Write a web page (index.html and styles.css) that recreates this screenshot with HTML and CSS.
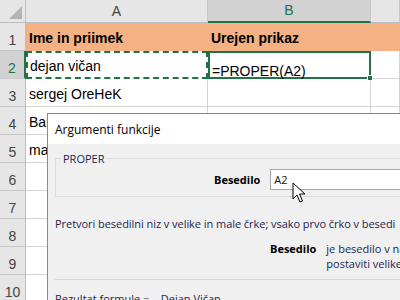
FILE: index.html
```html
<!DOCTYPE html>
<html lang="sl">
<head>
    <meta charset="UTF-8">
    <title>Argumenti funkcije</title>
<link rel="stylesheet" href="styles.css">
</head>
<body>
    <div class="sheet">
        <div class="corner"><span class="tri"></span></div>
        <div class="colhead">A</div>
        <div class="colhead active">B</div>
        <div class="colhead"></div>

        <div class="rowhead">1</div>
        <div class="cell title">Ime in priimek</div>
        <div class="cell title">Urejen prikaz</div>
        <div class="cell title"></div>

        <div class="rowhead active">2</div>
        <div class="cell copy">dejan vičan</div>
        <div class="cell edit">=PROPER(A2)<span class="handle"></span></div>
        <div class="cell"></div>

        <div class="rowhead">3</div>
        <div class="cell">sergej OreHeK</div>
        <div class="cell"></div>
        <div class="cell"></div>

        <div class="rowhead">4</div>
        <div class="cell">BaR</div>
        <div class="cell"></div>
        <div class="cell"></div>

        <div class="rowhead">5</div>
        <div class="cell">ma</div>
        <div class="cell"></div>
        <div class="cell"></div>

        <div class="rowhead">6</div>
        <div class="cell"></div>
        <div class="cell"></div>
        <div class="cell"></div>

        <div class="rowhead">7</div>
        <div class="cell"></div>
        <div class="cell"></div>
        <div class="cell"></div>

        <div class="rowhead">8</div>
        <div class="cell"></div>
        <div class="cell"></div>
        <div class="cell"></div>

        <div class="rowhead">9</div>
        <div class="cell"></div>
        <div class="cell"></div>
        <div class="cell"></div>

        <div class="rowhead">10</div>
        <div class="cell"></div>
        <div class="cell"></div>
        <div class="cell"></div>
    </div>

    <div class="dialog">
        <div class="dtitle">Argumenti funkcije</div>
        <div class="dbody">
            <fieldset class="group">
                <legend>PROPER</legend>
                <div class="arg">
                    <label>Besedilo</label>
                    <div class="input">A2</div>
                </div>
            </fieldset>
            <p class="desc">Pretvori besedilni niz v velike in male črke; vsako prvo črko v besedi</p>
            <div class="help">
                <b>Besedilo</b>
                <span>je besedilo v narekovajih, formula, ki vrne besedilo ali sklic na celico<br>postaviti velike začetnice</span>
            </div>
            <div class="result">Rezultat formule =&nbsp;&nbsp;&nbsp; Dejan Vičan</div>
        </div>
    </div>

    <svg class="pointer" width="14" height="22" viewBox="0 0 14 22">
        <path d="M1 1 L1 17 L5 13 L8 20 L10.5 19 L7.5 12 L13 12 Z" fill="#fff" stroke="#000" stroke-width="1" stroke-linejoin="miter"/>
    </svg>
</body>
</html>
```

FILE: styles.css
```css
*{
    box-sizing: border-box;
    margin: 0;
    padding: 0;
}
body{
    width: 400px;
    height: 300px;
    overflow: hidden;
    background: #fff;
    position: relative;
    font-family: "Liberation Sans", Arial, sans-serif;
}
.sheet{
    display: grid;
    grid-template-columns: 26px 182px 163px 1fr;
    grid-template-rows: 23px repeat(10, 28px);
    width: 400px;
}
.corner{
    background: #e6e6e6;
    border-right: 1px solid #bdbdbd;
    border-bottom: 1px solid #bdbdbd;
    position: relative;
}
.corner .tri{
    position: absolute;
    right: 3px;
    bottom: 3px;
    width: 0;
    height: 0;
    border-left: 13px solid transparent;
    border-bottom: 13px solid #b4b4b4;
}
.colhead{
    background: #e6e6e6;
    border-right: 1px solid #c8c8c8;
    border-bottom: 1px solid #bdbdbd;
    color: #444;
    font-size: 14px;
    text-align: center;
    line-height: 22px;
}
.colhead.active{
    background: #d2d2d2;
    color: #217346;
    border-bottom: 2px solid #217346;
    line-height: 21px;
}
.rowhead{
    background: #e6e6e6;
    border-right: 1px solid #bdbdbd;
    border-bottom: 1px solid #c8c8c8;
    color: #444;
    font-size: 14px;
    text-align: center;
    padding-top: 9px;
}
.rowhead.active{
    background: #d2d2d2;
    color: #217346;
    border-right: 2px solid #217346;
}
.cell{
    border-right: 1px solid #d4d4d4;
    border-bottom: 1px solid #d4d4d4;
    font-size: 14px;
    color: #000;
    padding: 7px 0 0 3px;
    white-space: nowrap;
    overflow: hidden;
}
.cell.title{
    background: #f4b183;
    border-color: #f4b183;
    font-weight: bold;
}
.cell.copy{
    border: 2px dashed #217346;
    padding: 5px 0 0 2px;
}
.cell.edit{
    border: 2px solid #217346;
    padding: 10px 0 0 2px;
    overflow: visible;
    position: relative;
}
.handle{
    position: absolute;
    right: -4px;
    bottom: -4px;
    width: 6px;
    height: 6px;
    background: #217346;
    border: 1px solid #fff;
}
.dialog{
    position: absolute;
    left: 47px;
    top: 113px;
    width: 353px;
    height: 187px;
    border: 1px solid #6f8fb0;
    border-right: none;
    border-bottom: none;
    background: #f0f0f0;
    font-family: "Open Sans", "Noto Sans", sans-serif;
    font-size: 11px;
    color: #000;
    overflow: hidden;
}
.dtitle{
    background: #fff;
    height: 30px;
    padding: 7px 0 0 7px;
    font-size: 12px;
}
.dbody{
    padding: 7px 0 0 7px;
}
.group{
    border: 1px solid #dcdcdc;
    border-right: none;
    height: 46px;
}
.group legend{
    margin-left: 5px;
    padding: 0 2px;
    font-size: 11px;
    color: #1e1e50;
}
.arg{
    display: flex;
    align-items: center;
    margin: 3px 0 0 158px;
    gap: 10px;
}
.arg label{
    font-weight: bold;
}
.input{
    flex: 1;
    height: 21px;
    background: #fff;
    border: 1px solid #a8a8a8;
    border-right: none;
    padding: 2px 0 0 3px;
    color: #111;
}
.desc{
    margin-top: 19px;
    color: #1e1e50;
    white-space: nowrap;
    letter-spacing: -0.05px;
}
.help{
    display: flex;
    gap: 10px;
    margin: 10px 0 0 215px;
    white-space: nowrap;
}
.help span{
    line-height: 15px;
    color: #1e1e50;
}
.result{
    border-top: 1px solid #d8d8d8;
    margin-top: 8px;
    padding-top: 11px;
    white-space: nowrap;
    color: #1e1e50;
}
.pointer{
    position: absolute;
    left: 292px;
    top: 182px;
}
```
